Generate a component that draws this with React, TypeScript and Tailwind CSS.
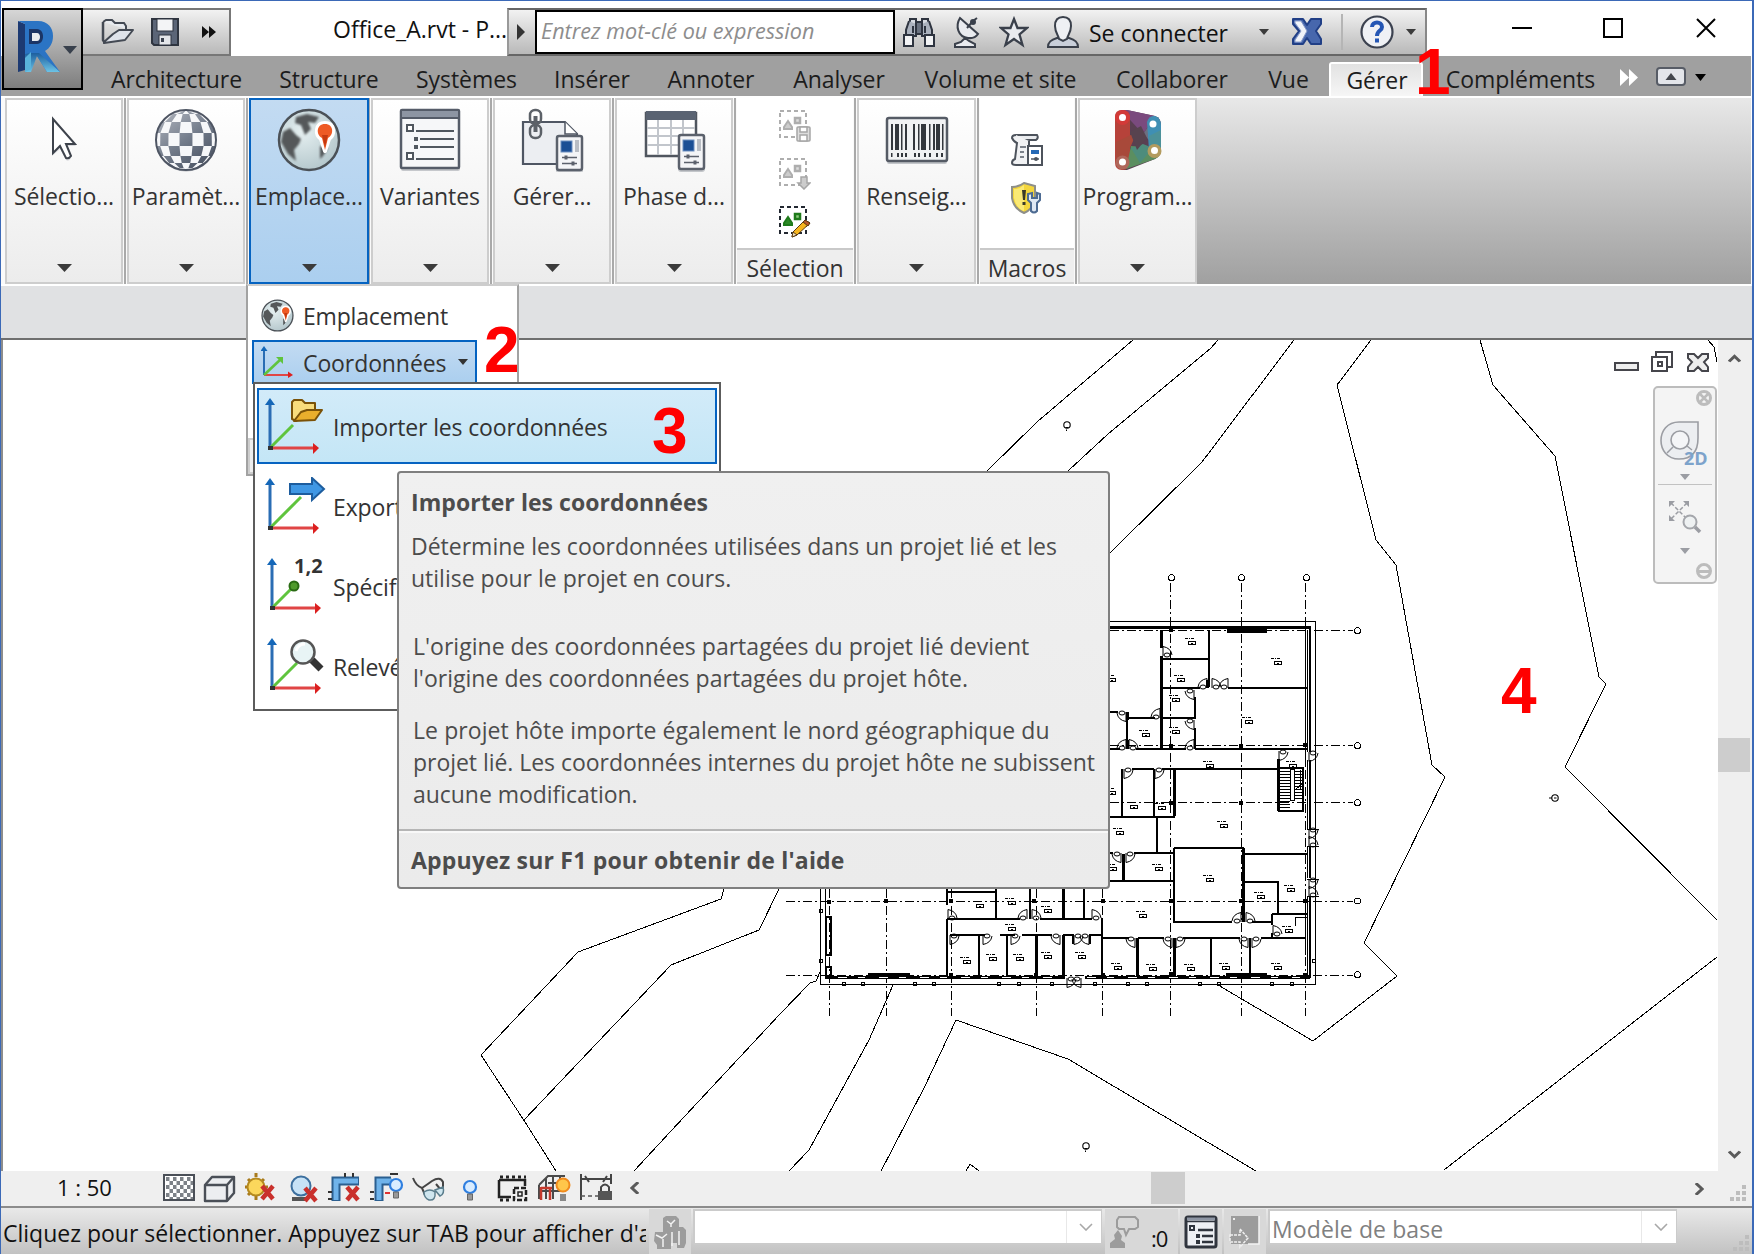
import React from 'react';
import type { ReactNode } from 'react';

/* ---------- small shared glyphs ---------- */

function Caret({ className = '' }: { className?: string }) {
  return (
    <svg className={className} viewBox="0 0 16 8" preserveAspectRatio="none">
      <path d="M0 0H16L8 8Z" fill="currentColor" />
    </svg>
  );
}

function RedNumber({ n, className }: { n: string; className: string }) {
  return (
    <span
      className={`absolute z-40 font-['Liberation_Sans',sans-serif] text-[64px] font-bold leading-[64px] text-[#ff0000] ${className}`}
    >
      {n}
    </span>
  );
}

/* ---------- title bar icons ---------- */

function RevitLogo() {
  return (
    <svg className="h-[54px] w-[46px]" viewBox="0 0 46 54">
      <defs>
        <linearGradient id="rleg" x1="0" y1="0" x2="0" y2="1">
          <stop offset="0" stopColor="#1d5f9e" />
          <stop offset="1" stopColor="#6cc3e6" />
        </linearGradient>
      </defs>
      <path d="M1 1L8 4V50L1 52Z" fill="#1d3a72" />
      <path d="M1 1H21C31 1 36 8 36 16C36 23 33 28 28 31L43 52H30L18 33H14V50L8 52V4Z" fill="#2b74c4" />
      <path d="M14 33H22L43 52H30L20 36L14 52H8V34Z" fill="url(#rleg)" />
      <path d="M8 38L14 32V49L8 52Z" fill="#59b3dc" />
      <path d="M12 9H20C28 9 28 24 20 24H12Z" fill="#1b3566" />
      <path d="M15 13H20C24 13 24 21 20 21H15Z" fill="#e8ecf1" />
    </svg>
  );
}

function FolderIcon() {
  return (
    <svg className="h-[26px] w-[34px]" viewBox="0 0 34 26">
      <path d="M2 3L5 1H11L14 4H23L25 7V10" fill="#e8ebef" stroke="#444a54" strokeWidth="2" />
      <path d="M2 3V21L4 24" fill="none" stroke="#444a54" strokeWidth="2.500" />
      <path d="M3 23L12 15L18 11H32L24 21L3 24Z" fill="#dfe3ea" stroke="#444a54" strokeWidth="2" strokeLinejoin="round" />
    </svg>
  );
}

function SaveIcon() {
  return (
    <svg className="h-[28px] w-[28px]" viewBox="0 0 28 28">
      <path d="M1 1H27V27H3L1 25Z" fill="#5b6577" stroke="#2f3540" strokeWidth="2" />
      <rect x="6" y="1" width="16" height="12" fill="#f3f4f6" stroke="#2f3540" />
      <rect x="8" y="17" width="12" height="10" fill="#e4e6ea" stroke="#2f3540" />
      <rect x="10" y="20" width="3" height="4" fill="#3c4350" />
    </svg>
  );
}

function Binoculars() {
  return (
    <svg className="h-[32px] w-[32px]" viewBox="0 0 32 32" stroke="#2e3440" strokeWidth="2">
      <path d="M7 3H13V13H7Z M19 3H25V13H19Z" fill="#d6dae1" />
      <path d="M6 5L3 14V20H13V8 M26 5L29 14V20H19V8" fill="#aab1bd" />
      <rect x="13" y="6" width="6" height="12" fill="#6a7280" />
      <rect x="1" y="19" width="9" height="11" fill="#f2f3f5" />
      <rect x="22" y="19" width="9" height="11" fill="#f2f3f5" />
      <path d="M10 10V17 M22 10V17" />
    </svg>
  );
}

function Satellite() {
  return (
    <svg className="h-[32px] w-[30px]" viewBox="0 0 30 32" stroke="#3a404b" strokeWidth="2">
      <path d="M8 2C3 10 6 21 16 22C20 22.500 24 21 26 18Z" fill="#e9ebef" />
      <path d="M15 12L21 5L25 2" fill="none" />
      <circle cx="21" cy="6" r="2" fill="#3a404b" />
      <path d="M13 22L17 25L23 28V31H3V28L9 26Z" fill="#e9ebef" />
    </svg>
  );
}

function Star() {
  return (
    <svg className="h-[32px] w-[30px]" viewBox="0 0 30 32">
      <path d="M15 3L18.500 12H28L20.500 18.500L23.500 29L15 23L6.500 29L9.500 18.500L2 12H11.500Z" fill="#e9ebef" stroke="#3a404b" strokeWidth="2.300" />
    </svg>
  );
}

function Person() {
  return (
    <svg className="h-[34px] w-[34px]" viewBox="0 0 34 34">
      <path d="M11 23C5 25 2 27 2 32H32C32 27 29 25 23 23Z" fill="#c9cfda" stroke="#3a404b" strokeWidth="2" />
      <path d="M17 2C11 2 9 6 9 11C9 18 13 21 13 24L17 26L21 24C21 21 25 18 25 11C25 6 23 2 17 2Z" fill="#eef0f4" stroke="#3a404b" strokeWidth="2" />
    </svg>
  );
}

function ExchangeX() {
  return (
    <svg className="h-[28px] w-[30px]" viewBox="0 0 30 28" strokeWidth="2" strokeLinejoin="round">
      <path d="M1 1H11L15 7L19 1H29V6L24 13L29 21V26H19L15 20L11 26H1V21L7 13L1 6Z" fill="#4767ad" stroke="#213f86" />
      <path d="M3 3H9L15 13L9 24H3V22L9 13L3 5Z" fill="#f0f3f9" stroke="#8a9cc8" strokeWidth="1" />
    </svg>
  );
}

function HelpIcon() {
  return (
    <svg className="h-[34px] w-[34px]" viewBox="0 0 34 34">
      <circle cx="17" cy="17" r="15.500" fill="#eff1f5" stroke="#3c4250" strokeWidth="2.200" />
      <path d="M12 12C12 6 22 6 22 12C22 16 17 15 17 21" fill="none" stroke="#2456b4" strokeWidth="4" />
      <rect x="15" y="23.500" width="4" height="4" fill="#2456b4" />
    </svg>
  );
}

/* ---------- ribbon icons ---------- */

function CursorIcon() {
  return (
    <svg className="h-[64px] w-[64px]" viewBox="0 0 64 64">
      <path d="M21 12V47L28 41L34 52Q37 54 39 50L35 38H44Z" fill="#b9bcc2" opacity=".5" />
      <path d="M21 11V45L28 38L34 50Q37 51 39 48L34 36H43Z" fill="#fff" stroke="#3e434c" strokeWidth="2" />
    </svg>
  );
}

function CheckerSphere() {
  const lat = [-31, -26, -18, -7, 6, 16, 23, 28];
  const fr = [-1, -0.88, -0.6, -0.22, 0.22, 0.6, 0.88, 1];
  const cells: ReactNode[] = [];
  const r = (y: number) => Math.sqrt(Math.max(0, 30 * 30 - y * y));
  for (let i = 0; i < 7; i++)
    for (let j = 0; j < 7; j++)
      if ((i + j) % 2 === 0) {
        const a = Math.max(-30, lat[i]);
        const b = Math.min(30, lat[i + 1]);
        cells.push(
          <path key={`${i}-${j}`} d={`M${32 + fr[j] * r(a)} ${32 + a}L${32 + fr[j + 1] * r(a)} ${32 + a}L${32 + fr[j + 1] * r(b)} ${32 + b}L${32 + fr[j] * r(b)} ${32 + b}Z`} fill="url(#chk)" />,
        );
      }
  return (
    <svg className="h-[64px] w-[64px]" viewBox="0 0 64 64">
      <defs>
        <linearGradient id="chk" gradientUnits="userSpaceOnUse" x1="12" y1="6" x2="50" y2="60">
          <stop offset="0" stopColor="#a9aeb8" />
          <stop offset=".5" stopColor="#727b8a" />
          <stop offset="1" stopColor="#4a5363" />
        </linearGradient>
      </defs>
      <ellipse cx="32" cy="33.500" rx="30" ry="30" fill="#b5b8be" />
      <circle cx="32" cy="32" r="30" fill="#f6f7f9" />
      {cells}
      <circle cx="32" cy="32" r="30" fill="none" stroke="#4e5563" strokeWidth="2" />
    </svg>
  );
}

function Globe({ className }: { className: string }) {
  return (
    <svg className={className} viewBox="0 0 64 64">
      <defs>
        <radialGradient id="globe" cx=".4" cy=".35" r=".7">
          <stop offset="0" stopColor="#e6f0f1" />
          <stop offset="1" stopColor="#b3c6cb" />
        </radialGradient>
        <filter id="soft"><feGaussianBlur stdDeviation="1.100" /></filter>
      </defs>
      <circle cx="32" cy="32" r="30" fill="url(#globe)" stroke="#4b5157" strokeWidth="2.500" />
      <g fill="#55585a" filter="url(#soft)">
        <path d="M6 24L13 20L19 27L24 31L22 36L17 42L19 53L11 46L4 34Z" />
        <path d="M19 9L30 6L42 9L38 15L31 14L34 21L28 27L24 17L18 15Z" />
        <path d="M43 38L51 40L46 48L43 51Z" />
      </g>
      <path d="M48 43L44 31C38 27 38 15 48 15C58 15 58 27 52 31Z" fill="#f05a22" stroke="#fff" strokeWidth="4" strokeLinejoin="round" />
      <path d="M48 42L45 30C39 27 39 16 48 16C57 16 57 27 51 30Z" fill="#ee5a24" />
      <path d="M45 27L48 39L51 27Z" fill="#c53a10" />
    </svg>
  );
}

function VariantsIcon() {
  return (
    <svg className="h-[64px] w-[64px]" viewBox="0 0 64 64">
      <rect x="3" y="4" width="59" height="59" fill="#c6c8cc" rx="2" />
      <rect x="3" y="2" width="58" height="58" rx="1" fill="#f6f7f9" stroke="#555c69" strokeWidth="2.500" />
      <rect x="4" y="3" width="56" height="6" fill="#8d95a3" />
      <rect x="4" y="9" width="56" height="2" fill="#555c69" />
      <path d="M18 23H56 M22 31H56 M22 39H56 M18 51H56" stroke="#50575f" strokeWidth="2.200" />
      <path d="M9 17h6v6h-6z M9 45h6v6h-6z" fill="#fff" stroke="#50575f" strokeWidth="2" />
      <path d="M16 29h4v4h-4z M16 37h4v4h-4z" fill="#50575f" />
    </svg>
  );
}

function PropertySheet({ x, y }: { x: number; y: number }) {
  return (
    <g transform={`translate(${x} ${y})`}>
      <rect x="-1" y="-1" width="27" height="38" rx="3" fill="#c3c6ca" />
      <rect x="0" y="0" width="25" height="34" rx="2" fill="#f4f5f7" stroke="#5b616c" strokeWidth="2.500" />
      <rect x="4" y="5" width="11" height="11" fill="#1b4f95" stroke="#6c8fc0" />
      <rect x="18" y="4" width="4" height="12" fill="#b9bdc4" />
      <path d="M5 21.500H20 M5 27.500H20" stroke="#5b616c" strokeWidth="1.500" />
      <path d="M9 19.500v4M16 25.500v4" stroke="#5b616c" strokeWidth="3" />
    </g>
  );
}

function LinkSheet() {
  return (
    <svg className="h-[64px] w-[64px]" viewBox="0 0 64 64">
      <path d="M3 14H45L57 26V56H3Z" fill="#eceef2" stroke="#4f5663" strokeWidth="2.200" />
      <path d="M45 14V26H57" fill="#fff" stroke="#4f5663" strokeWidth="1.500" />
      <g fill="none" stroke="#5c6168" strokeWidth="2.500">
        <rect x="10" y="2" width="11" height="14" rx="5" />
        <rect x="10" y="17" width="11" height="13" rx="5" />
        <path d="M15.500 8V24" strokeWidth="4" />
      </g>
      <PropertySheet x={37} y={28} />
    </svg>
  );
}

function PhaseIcon() {
  return (
    <svg className="h-[64px] w-[64px]" viewBox="0 0 64 64">
      <rect x="4" y="5" width="50" height="43" fill="#fff" stroke="#50565f" strokeWidth="2.500" />
      <rect x="4" y="3" width="50" height="9" fill="#5a6372" />
      <path d="M5 20H53M5 28H53M5 37H53M16 12V47M29 12V47M41 12V47" stroke="#c2c6cc" strokeWidth="2" />
      <PropertySheet x={37} y={27} />
    </svg>
  );
}

function Barcode() {
  return (
    <svg className="h-[64px] w-[64px]" viewBox="0 0 64 64">
      <rect x="2" y="13" width="60" height="43" rx="2" fill="#c3c6ca" />
      <rect x="2" y="10" width="60" height="43" rx="2" fill="#f1f2f4" stroke="#555b65" strokeWidth="2.500" />
      <g fill="#33373d">
        <path d="M6 16h2v26h-2z M10 16h4v26h-4z M16 16h1.500v26h-1.500z M20 16h2v26h-2z M28 16h2v26h-2z M33 16h1.500v26h-1.500z M36 16h5v26h-5z M44 16h1.500v26h-1.500z M48 16h2v26h-2z M51 16h4v26h-4z M57 16h1.500v26h-1.500z" />
        <path d="M6 45h1.500v4h-1.500z M12 45h2v4h-2z M16 45h2v4h-2z M20 45h2v4h-2z M29 45h2v4h-2z M33 45h2v4h-2z M39 45h2v4h-2z M44 45h2v4h-2z M51 45h2v4h-2z M56 45h2v4h-2z" />
      </g>
    </svg>
  );
}

function DynamoIcon() {
  return (
    <svg className="h-[64px] w-[50px]" viewBox="0 0 50 64">
      <path d="M9 2H14L42 8Q48 10 48 17V42Q48 48 42 51L14 62H9Z" fill="#5a3f52" />
      <path d="M8 2L14 2L42 8L30 26Z" fill="#7a4a7e" />
      <path d="M42 9V38L30 26Z" fill="#6d6f80" />
      <path d="M2 9Q2 2 9 2Q17 2 17 9V54Q17 62 9 62Q2 62 2 54Z" fill="#b6423a" />
      <path d="M3 34L24 24L17 40L13 61Q3 62 3 54Z" fill="#a8493a" />
      <path d="M13 61L18 38L46 40Q50 47 42 51Z" fill="#5b8e60" />
      <path d="M18 40L30 36L40 40L27 55Z" fill="#4d8c7c" />
      <path d="M34 14Q36 7 42 8Q48 10 48 17V42H36Z" fill="#3f8fb4" />
      <path d="M36 28L48 22V44H38Z" fill="#4c9199" />
      <path d="M17 24L28 18L34 30L24 42Z" fill="#57434f" />
      <circle cx="41.500" cy="43" r="7" fill="#b39b5e" />
      <circle cx="9.500" cy="9.500" r="7.500" fill="#d33a38" />
      <circle cx="9.500" cy="54.500" r="7" fill="#b0675a" />
      <g fill="#fff"><circle cx="9.500" cy="9.500" r="3.500" /><circle cx="9.500" cy="54" r="3.500" /><circle cx="40" cy="16" r="3.500" /><circle cx="41.500" cy="42.500" r="3.500" /></g>
    </svg>
  );
}

function SelectSet({ kind }: { kind: 'save' | 'load' | 'edit' }) {
  const on = kind === 'edit';
  return (
    <svg className="h-[32px] w-[32px]" viewBox="0 0 32 32">
      <path d="M1 1H27V27H1Z" fill="none" stroke={on ? '#222831' : '#aeaeae'} strokeWidth="2" strokeDasharray="4 3" />
      <rect x="16" y="8" width="5" height="5" fill={on ? '#8fcb7f' : '#ddd'} stroke={on ? '#1e7a1a' : '#aeaeae'} strokeWidth="2.500" />
      <path d="M5 19V17L9 11L13 17V19Z" fill={on ? '#2d8a26' : '#ccc'} stroke={on ? '#1e7a1a' : '#aeaeae'} strokeWidth="2" />
      {kind === 'save' && (
        <g stroke="#a6a6a6" strokeWidth="1.500"><rect x="18" y="17" width="13" height="14" rx="1" fill="#ddd" /><rect x="21" y="17" width="7" height="5" fill="#fff" /><rect x="21" y="25" width="7" height="6" fill="#fff" /></g>
      )}
      {kind === 'load' && <path d="M22 19H28V25H31L25 31L19 25H22Z" fill="#ccc" stroke="#a6a6a6" strokeWidth="1.500" />}
      {kind === 'edit' && (
        <g stroke="#5a3a10" strokeWidth="1"><path d="M13 31L14 26L26 14L31 17L18 29Z" fill="#f6b51e" /><path d="M26 14L31 17L29 20L24 16Z" fill="#b8562b" /><path d="M13 31L14 26L18 29Z" fill="#f4e2c0" /></g>
      )}
    </svg>
  );
}

function MacroScroll() {
  return (
    <svg className="h-[32px] w-[32px]" viewBox="0 0 32 32">
      <path d="M5 1H26Q28 4 25 6H5" fill="#e9ebee" stroke="#4d535c" strokeWidth="2" />
      <path d="M5 1Q1 1 1 4Q3 8 6 9L4 25Q1 26 1 29Q1 31 5 31H18V7" fill="#f1f2f4" stroke="#4d535c" strokeWidth="2" />
      <path d="M9 13H15M9 18H13M9 23H13" stroke="#7b818a" strokeWidth="2" />
      <rect x="17" y="12" width="14" height="19" fill="#fff" stroke="#4d535c" strokeWidth="2" />
      <rect x="20" y="16" width="8" height="4" fill="#2669b5" />
      <path d="M20 25H28" stroke="#4d535c" strokeWidth="1.500" />
      <circle cx="25" cy="25" r="2" fill="#4d535c" />
    </svg>
  );
}

function MacroShield() {
  return (
    <svg className="h-[32px] w-[32px]" viewBox="0 0 32 32">
      <path d="M13 1L24 4V18Q22 27 13 31Q3 27 1 16V5Q8 5 13 1Z" fill="#f4d63c" stroke="#8e8f89" strokeWidth="2" />
      <path d="M13 3V29Q5 26 3 16V7Q9 7 13 3Z" fill="#fae975" />
      <path d="M11 8H15L14 18H12Z M11.500 20H14.500V23H11.500Z" fill="#3b3a28" />
      <path d="M17 12V18L20 21V29Q23 32 26 29V21L29 18V12L26 11V16H21V11Z" fill="#dfe8f3" stroke="#4d6b92" strokeWidth="2" />
    </svg>
  );
}

/* ---------- ribbon ---------- */

function RibbonPanel({ label, icon, active = false, width = 'w-[120px]' }: { label: string; icon: ReactNode; active?: boolean; width?: string }) {
  return (
    <div
      className={
        `flex h-[186px] shrink-0 flex-col items-center border-2 pt-[7px] ${width} ` +
        (active
          ? 'relative -mr-[2px] border-[#0563c1] bg-linear-to-b from-[#c3dbf2] to-[#abcfef]'
          : 'border-[#cdcdcd] bg-linear-to-b from-[#ffffff] to-[#ececec]')
      }
    >
      <div className="flex h-[66px] shrink-0 items-center">{icon}</div>
      <span className="mt-[8px] shrink-0 whitespace-nowrap text-[23px] leading-[30px] tracking-[-0.1px] text-[#333]">{label}</span>
      <Caret className="mt-[53px] h-[8px] w-[15px] shrink-0 text-[#3b3b3b]" />
    </div>
  );
}

function Divider() {
  return <div className="mx-px h-[186px] w-[2px] shrink-0 bg-[#a9a9a9]" />;
}

function IconPanel({ label, children, width }: { label: string; children: ReactNode; width: string }) {
  return (
    <div className={`flex h-[186px] shrink-0 flex-col bg-white ${width}`}>
      <div className="flex flex-1 flex-col items-center justify-center gap-[16px] pt-[2px]">{children}</div>
      <div className="flex h-[36px] items-center justify-center border-b-2 border-t-2 border-b-[#d4d4d4] border-t-[#c9c9c9] bg-[#eeeeee] pt-[3px] text-[23px] leading-[30px] text-[#333]">
        {label}
      </div>
    </div>
  );
}

/* ---------- coordinate menu icons ---------- */

function AxisIcon({ kind }: { kind: 'import' | 'export' | 'point' | 'report' }) {
  const s = kind === 'point' || kind === 'report' ? 2 : 0;
  const end = kind === 'import' ? [28, 28] : kind === 'export' ? [36, 20] : kind === 'point' ? [26, 30] : [30, 26];
  return (
    <svg className="h-[58px] w-[62px] shrink-0" viewBox="0 0 62 58">
      <g transform={`translate(${s} 0)`}>
        <path d="M5 51V6" stroke="#2a6db4" strokeWidth="3" />
        <path d="M5 1L10 8H0Z" fill="#1467b8" />
        <path d="M5 51H50" stroke="#e04545" strokeWidth="3" />
        <path d="M48 46L54 51L48 57Z" fill="#dc1f1f" />
        <path d={`M5 51L${end[0]} ${end[1]}`} stroke="#5fc43d" strokeWidth="3" />
        <rect x="3" y="49" width="5" height="4" fill="#333" />
      </g>
      {kind === 'import' && (
        <g stroke="#7a5208" strokeWidth="2" strokeLinejoin="round">
          <path d="M27 5L29 3H37L40 6H50V13L31 24L27 22Z" fill="#f8dc7c" />
          <path d="M29 24L36 15L42 13H57L50 23Z" fill="#e9ae2c" />
        </g>
      )}
      {kind === 'export' && (
        <path d="M25 7H47V1L59 12L47 23V17H25Z" fill="#3f97e4" stroke="#1d5d9e" strokeWidth="2" />
      )}
      {kind === 'point' && (
        <>
          <circle cx="29" cy="29" r="4.500" fill="#4f9a2c" stroke="#2a6a14" strokeWidth="2" />
          <text x="29" y="16" fontFamily="Open Sans, sans-serif" fontWeight="700" fontSize="20" fill="#333">1,2</text>
        </>
      )}
      {kind === 'report' && (
        <>
          <path d="M47 23L56 32" stroke="#333" strokeWidth="7" />
          <circle cx="38" cy="15" r="11.500" fill="#e8f4f5" stroke="#555" strokeWidth="2.500" />
          <path d="M31 14Q33 7 40 7" fill="none" stroke="#fff" strokeWidth="3" />
        </>
      )}
    </svg>
  );
}

function SmallAxis() {
  return (
    <svg className="h-[32px] w-[32px]" viewBox="0 0 32 32">
      <path d="M3 29V4" stroke="#2a6db4" strokeWidth="2" /><path d="M3 0L6.500 5H-.500Z" fill="#1467b8" />
      <path d="M3 29H28" stroke="#e04545" strokeWidth="2" /><path d="M27 25.500L32 29L27 32Z" fill="#dc1f1f" />
      <path d="M3 29L20 13" stroke="#5fc43d" strokeWidth="2.500" /><path d="M15 11H22V18Z" fill="#5fc43d" />
    </svg>
  );
}

function MenuItem({ label, kind, active = false }: { label: string; kind: 'import' | 'export' | 'point' | 'report'; active?: boolean }) {
  return (
    <div
      className={
        'flex h-[76px] items-center gap-[6px] border-2 pl-[6px] text-[23px] leading-[30px] text-[#333] ' +
        (active ? 'border-[#0563c1] bg-linear-to-b from-[#d2ebf9] to-[#c4e6f6]' : 'border-transparent')
      }
    >
      <AxisIcon kind={kind} />
      <span className="whitespace-nowrap pt-[2px] tracking-[-0.15px]">{label}</span>
    </div>
  );
}

/* ---------- drawing area ---------- */

type P2 = [number, number];

const CONTOURS = [
  '1133,340 1037,422 987,471',
  '1218,340 1211,348 1108,434 1068,471',
  '1294,340 1202,462 1110,553',
  '1371,340 1337,385 1376,540 1396,565 1432,765 1445,777 1364,943 1397,976 1313,1041 1218,985',
  '1480,340 1493,385 1555,456 1599,677 1606,684 1565,767 1717,920',
  '1717,957 1444,1170',
  '881,1171 892,1150 925,1086 956,1020 1068,1059 1256,1171',
  '893,985 869,1040 809,1150 789,1171',
  '820,965 820,972 816,981 810,983 780,1014 671,1131 634,1171',
  '779,889 759,930 671,965 524,1120',
  '724,889 721,899 578,952 481,1055 525,1122 556,1171',
  '966,1171 970,1164 979,1171',
  '1708,340 1714,347 1717,362',
];

const THIN_WALLS =
  'M820.500 889V984H1315.500V621H1110 M825 889V978 M1307 630V752M1307 760V829M1307 846V878M1307 896V978' +
  'M1307 829H1319M1307 846H1319M1307 879H1319M1307 896H1319 M1305 630V765M1305 896V955' +
  'M1290 769V800H1294V769Z M1300 770V790 M1295 790L1302 784 M1295 917V926M1307 917H1295';

const WALLS =
  'M1209 630V687M1162 659H1209M1162 688H1200M1228 688H1307M1195 697V718H1162M1195 728V749M1127 712V748M1110 712H1118M1127 718H1155' +
  'M1110 749H1120M1136 749H1186M1195 749H1308M1132 769H1154M1162 769H1278M1122 769V817M1154 769V817M1110 817H1175' +
  'M1157 817V853M1110 853H1113M1134 853H1174M1110 881H1174M1174 848H1244M1174 848V922H1232M1252 922H1272M1244 854H1308M1244 882H1278V914M1272 914H1307M1272 914V925M1272 933V938' +
  'M1102 938H1129M1138 938H1164M1183 938H1240M1261 938H1305M1102 918V978M1211 938V977M1250 938V977' +
  'M947 892H996M996 889V919M1030 889V919M1084 889V919M947 919H1020M1040 919H1092M947 889V905M947 919V976M950 935H985M1000 935H1015M1022 935H1052M1063 935H1073V944M1102 935H1090V944' +
  'M979 935V976M1007 935V976M1278 768H1303V811H1278' +
  'M1310 627V752M1310 760V829M1310 846V878M1310 896V978';

const THICK_WALLS =
  'M1161 630V648M1161 656V749M1110 627H1311M1174.500 769V816M1278 759V811M1243.500 848V922M1123.500 854V881M1137 938V977M1174 938V977' +
  'M1036 935V976M1063.500 889V919M1063.500 935V976M1127 712V720M1127 740V749M1207 680V688M825 977H1065M1085 977H1310';

const DOORS: [number, number, number, number][] = [
  [1162, 656, 1, -1], [1208, 688, -1, -1], [1211, 688, 1, -1], [1229, 688, -1, -1], [1195, 690, -1, 1], [1195, 720, -1, 1],
  [1161, 718, -1, -1], [1127, 712, -1, 1], [1127, 749, -1, -1], [1128, 749, 1, -1], [1195, 749, -1, -1], [1123, 769, 1, 1], [1154, 769, 1, 1],
  [1278, 751, 1, 1], [1308, 752, 1, 1], [1308, 829, 1, 1], [1308, 846, 1, -1], [1308, 879, 1, 1], [1308, 896, 1, -1],
  [1122, 853, -1, 1], [1125, 853, 1, 1], [1242, 922, -1, -1], [1245, 922, 1, -1], [1272, 935, 1, -1],
  [1136, 938, -1, 1], [1173, 938, -1, 1], [1175, 938, 1, 1], [1249, 938, -1, 1], [1251, 938, 1, 1],
  [947, 919, 1, -1], [1028, 919, -1, -1], [1031, 919, 1, -1], [1091, 919, 1, -1],
  [949, 935, 1, 1], [982, 935, 1, 1], [1010, 935, 1, 1], [1061, 935, -1, 1], [1073, 935, 1, 1], [1090, 935, -1, 1],
  [1066, 978, 1, 1], [1082, 978, -1, 1],
];

const TAGS: P2[] = [
  [1192, 643], [1278, 663], [1181, 680], [1176, 700], [1249, 722], [1146, 735], [1176, 732], [1210, 766], [1293, 766],
  [1112, 680], [1134, 807], [1162, 808], [1112, 793], [1224, 826], [1120, 833], [1113, 869], [1159, 869], [1210, 880], [1291, 890],
  [1261, 897], [1143, 916], [1289, 931], [1118, 968], [1153, 969], [1191, 969], [1226, 968], [1278, 968],
  [980, 906], [1012, 903], [1048, 911], [1012, 929], [967, 962], [993, 959], [1020, 959], [1048, 957], [1082, 957],
];

const COLUMNS: P2[] = [
  [1171, 630], [1171, 746], [1241, 746], [1305, 745], [1171, 803], [1241, 803], [1171, 901], [1103, 901], [1241, 901], [1305, 901],
  [829, 902], [886, 901], [951, 901], [1034, 901], [1171, 974], [951, 975], [1036, 975], [1103, 975], [1305, 975],
];

const KNOBS: P2[] = [
  [821, 911], [821, 961], [844, 984], [863, 984], [915, 984], [934, 984], [999, 984], [1019, 984], [1052, 984], [1095, 984],
  [1128, 984], [1147, 984], [1200, 984], [1219, 984], [1272, 984], [1292, 984], [1314, 961],
];

function Tree({ x, y }: { x: number; y: number }) {
  return (
    <g transform={`translate(${x} ${y})`} shapeRendering="auto">
      <circle r="3.200" fill="#fff" strokeWidth="1.100" />
      <path d="M-1.500 2.500H1.500M-.500 4.500V6" />
    </g>
  );
}

function DrawingCanvas() {
  return (
    <svg className="h-[831px] w-[1715px] bg-white" viewBox="3 340 1715 831" shapeRendering="crispEdges" fill="none" stroke="#000">
      {CONTOURS.map((p) => <polyline key={p} points={p} strokeWidth="1" />)}
      <Tree x={1067} y={425} />
      <Tree x={1086} y={1146} />
      <g transform="translate(1555 798)" shapeRendering="auto"><circle r="3.200" strokeWidth="1.100" /><path d="M-1 0H1.500M-3 0H-6" /></g>

      <g strokeDasharray="9 3 2 3" strokeWidth="1">
        <path d="M829.500 889V1016M886.500 889V1016M951.500 889V1016M1036.500 889V1016M1102.500 889V1016M1170.500 583V1016M1241.500 583V1016M1305.500 583V1016" />
        <path d="M1110 630.500H1353M1110 745.500H1353M1110 802.500H1353M786 901.500H1353M786 975.500H1353" />
      </g>
      {[1171.5, 1241.5, 1306.5].map((x) => <circle key={x} cx={x} cy="577.500" r="3" />)}
      {[630.5, 745.5, 802.5, 901, 974.5].map((y) => <circle key={y} cx="1357.500" cy={y} r="3" />)}

      <path d={THIN_WALLS} />
      <path d={WALLS} strokeWidth="2" />
      <path d={THICK_WALLS} strokeWidth="3" />
      <path d="M1227 631H1267" strokeWidth="4" />
      <path d="M868 974.500H910M1226 974.500H1267" strokeWidth="4" />
      <path d="M826 917H831V955H826ZM826 967H831V976H826Z" strokeWidth="1.500" />
      <path d="M838 977.500H1063M1087 977.500H1300" stroke="#fff" strokeDasharray="9 11 7 14" />
      {Array.from({ length: 13 }, (_, i) => <path key={i} d={`M1279 ${771.5 + i * 3}H1290${i < 10 ? 'M1294 ' + (771.5 + i * 3) + 'H1303' : ''}`} />)}

      {DOORS.map(([x, y, sx, sy], i) => (
        <g key={i} transform={`translate(${x} ${y}) scale(${sx} ${sy})`} shapeRendering="auto">
          <path d="M1 0V9.500Q9 8 10 1" />
          <ellipse cx="5" cy="1" rx="3" ry="2" />
        </g>
      ))}
      {TAGS.map(([x, y], i) => (
        <g key={i}>
          <rect x={x - 3.5} y={y - 1.5} width="7" height="3" />
          <path d={`M${x - 1} ${y + 0.5}h2`} />
          <path d={`M${x - 7} ${y - 4.5}h10`} strokeDasharray="3 1 1 1" />
        </g>
      ))}
      {COLUMNS.map(([x, y], i) => <rect key={i} x={x - 2} y={y - 2} width="4" height="4" fill="#000" stroke="none" />)}
      {KNOBS.map(([x, y], i) => <ellipse key={i} cx={x} cy={y} rx="2" ry="1.500" />)}
    </svg>
  );
}

/* ---------- navigation bar ---------- */

function NavBar() {
  return (
    <div className="absolute left-[1652px] top-[385px] flex h-[198px] w-[64px] flex-col items-center rounded-[5px] border-2 border-[#bcbcbc] bg-[#f4f4f4]">
      <svg className="h-[194px] w-[60px]" viewBox="1655 388 60 194" fill="none">
        <circle cx="1704" cy="398" r="6.500" fill="#f4f4f4" stroke="#bcbcbc" strokeWidth="3" />
        <path d="M1700 394L1708 402M1708 394L1700 402" stroke="#bcbcbc" strokeWidth="2.500" />
        <path d="M1698 422H1679C1655 422 1655 459 1679 459C1693 459 1698 450 1698 438Z" fill="#eceef1" stroke="#9b9da3" strokeWidth="1.600" />
        <circle cx="1680" cy="440" r="9" fill="#f4f5f7" stroke="#9b9da3" strokeWidth="1.600" />
        <path d="M1673 447L1667 453M1687 446L1692 450" stroke="#9b9da3" strokeWidth="1.500" />
        <text x="1684" y="465" fontFamily="Open Sans, sans-serif" fontSize="18" fontWeight="700" fill="#7da3cb">2D</text>
        <path d="M1680 474H1690L1685 480Z M1680 548H1690L1685 554Z" fill="#9b9da3" />
        <path d="M1658 484.500H1712" stroke="#c2c2c2" />
        <path d="M1671 503L1687 519M1687 503L1671 519" stroke="#9b9da3" strokeWidth="1.500" strokeDasharray="4 2" />
        <path d="M1669 501H1675L1669 507Z M1689 501H1683L1689 507Z M1669 521H1675L1669 515Z" fill="#9b9da3" />
        <path d="M1695 527L1700 532" stroke="#9b9da3" strokeWidth="3.500" />
        <circle cx="1690" cy="522" r="6.500" fill="#eef1f2" stroke="#a4a6ab" strokeWidth="2" />
        <circle cx="1704" cy="571" r="6.500" fill="#f4f4f4" stroke="#bcbcbc" strokeWidth="3" />
        <path d="M1699 570H1709V573H1699Z" fill="#bcbcbc" />
      </svg>
    </div>
  );
}

function MdiControls() {
  return (
    <svg className="absolute left-[1611px] top-[348px] h-[26px] w-[100px]" viewBox="1612 349 100 26" fill="#fff" stroke="#45454b" strokeWidth="2">
      <rect x="1615" y="363" width="23" height="7" fill="#eee" />
      <path d="M1656 357V352H1672V367H1667" />
      <rect x="1652" y="357" width="15" height="14" />
      <rect x="1658" y="362" width="4" height="4" />
      <path d="M1688 354H1694L1698 358L1702 354H1708V358L1704 362L1708 367V371H1702L1698 367L1694 371H1688V367L1692 362L1688 358Z" fill="#eee" />
    </svg>
  );
}

/* ---------- view control bar ---------- */

function RedX({ x, y }: { x: number; y: number }) {
  return <path d={`M${x} ${y}l11 13M${x + 11} ${y}l-11 13`} stroke="#c9302c" strokeWidth="4.500" />;
}

function Bulb({ x, y }: { x: number; y: number }) {
  return (
    <g>
      <circle cx={x} cy={y} r="6" fill="#d9ecff" stroke="#2f7fe0" strokeWidth="2.200" />
      <path d={`M${x - 2.500} ${y + 7}h5v6h-5z`} fill="#999" stroke="#666" />
    </g>
  );
}

function ViewIcons() {
  return (
    <svg className="h-[36px] w-[450px]" viewBox="163 1171 450 36" fill="none">
      {/* detail level */}
      <rect x="164" y="1176" width="30" height="23" fill="#fff" />
      {Array.from({ length: 24 }, (_, i) => {
        const r = Math.floor(i / 4);
        return <path key={i} d={`M${166 + (i % 4) * 7 + (r % 2) * 3.5} ${1177 + r * 4}h3.500v4h-3.500z`} fill="#7d8288" />;
      })}
      <rect x="164" y="1175" width="30" height="25" stroke="#4a4f57" strokeWidth="2" />
      {/* visual style */}
      <g stroke="#4a4f57" strokeWidth="2.400" strokeLinejoin="round">
        <path d="M205 1185L212 1177H234V1193L227 1201H205Z" fill="#eceef1" />
        <path d="M205 1185H227V1201M227 1185L234 1177" />
      </g>
      {/* sun path off */}
      <path d="M256 1173V1177M256 1196V1200M245 1187H248M264 1187H268M248 1179L250 1181M264 1179L262 1181M248 1195L250 1193" stroke="#a87a1c" strokeWidth="3" />
      <circle cx="256" cy="1187" r="8.500" fill="#fbd75c" stroke="#b58a20" strokeWidth="2" />
      <RedX x={262} y={1186} />
      {/* shadows off */}
      <path d="M292 1199H308" stroke="#555" strokeWidth="4" />
      <circle cx="301" cy="1186" r="9.500" fill="#c7e2f6" stroke="#3c6f9e" strokeWidth="2" />
      <RedX x={305} y={1188} />
      {/* crop region off */}
      <path d="M336 1201V1181H359" stroke="#2b5f90" strokeWidth="9" />
      <path d="M336 1200V1181H358" stroke="#6fb3ea" strokeWidth="5" />
      <path d="M328 1192H332M328 1199H332M345 1173V1177M353 1173V1177" stroke="#333" strokeWidth="2" />
      <RedX x={347} y={1187} />
      {/* show crop region */}
      <path d="M379 1201V1181H391" stroke="#2b5f90" strokeWidth="9" />
      <path d="M379 1200V1181H392" stroke="#6fb3ea" strokeWidth="5" />
      <path d="M370 1192H374M370 1199H374M390 1174H398" stroke="#333" strokeWidth="2" />
      <path d="M385 1193H390" stroke="#d33" strokeWidth="2" />
      <Bulb x={396} y={1185} />
      {/* temporary hide */}
      <path d="M413 1178Q416 1186 422 1188Q428 1184 432 1181Q440 1176 443 1182V1188M422 1188L425 1195M436 1184L441 1190" stroke="#444" strokeWidth="2" />
      <path d="M424 1192Q430 1188 435 1192Q436 1201 429 1200Q424 1198 424 1192ZM435 1190L443 1187Q445 1194 440 1196Z" fill="#cfe6ef" stroke="#5a7d8c" strokeWidth="1.500" />
      {/* reveal hidden */}
      <Bulb x={470} y={1187} />
      {/* temporary view properties */}
      <path d="M499 1180V1197H511M499 1180H525V1186" stroke="#222" strokeWidth="2.500" />
      <path d="M500 1177H526M500 1200H512" stroke="#222" strokeWidth="3" strokeDasharray="3 3" />
      <rect x="514" y="1188" width="12" height="12" stroke="#222" strokeWidth="2.500" strokeDasharray="5 2" />
      <rect x="518" y="1192" width="4" height="4" stroke="#222" strokeWidth="1.500" />
      {/* analytical model */}
      <path d="M539 1185V1199M546 1178V1199M553 1176V1199M560 1176V1190M539 1185L548 1176H565M539 1191H562M548 1183H562" stroke="#4a4a4a" strokeWidth="2" />
      <path d="M541 1187V1200M550 1187V1200M541 1188H552" stroke="#c63a2c" strokeWidth="2.500" />
      <circle cx="563" cy="1185" r="6.500" fill="#ffc64a" stroke="#f08a1c" strokeWidth="2" />
      <path d="M560 1194h6v7h-6z" fill="#888" />
      {/* constraints */}
      <path d="M581 1174V1200M611 1174V1184M581 1179H611M585 1176L589 1182M607 1176L603 1182" stroke="#444" strokeWidth="2" />
      <path d="M581 1196H598" stroke="#555" strokeWidth="1.500" strokeDasharray="4 3" />
      <path d="M601 1191V1187Q605 1182 609 1187V1191" stroke="#444" strokeWidth="2" />
      <rect x="598" y="1191" width="14" height="9" fill="#555" />
    </svg>
  );
}

function Grip() {
  return (
    <svg className="h-[17px] w-[17px]" viewBox="0 0 17 17" fill="#bdbdbd">
      <path d="M12 0h4v4h-4zM6 6h4v4h-4zM12 6h4v4h-4zM0 12h4v4h-4zM6 12h4v4h-4zM12 12h4v4h-4z" />
    </svg>
  );
}

function Chevron({ d, className }: { d: string; className: string }) {
  return (
    <svg className={className} viewBox="0 0 12 12" fill="none" stroke="currentColor" preserveAspectRatio="none">
      <path d={d} strokeWidth="3" />
    </svg>
  );
}

function Combo({ text }: { text?: string }) {
  return (
    <div className="flex h-[36px] w-[409px] shrink-0 border-2 border-r border-[#cbcbcb] bg-white">
      <span className="flex-1 pl-[2px] pt-[2px] text-[23px] leading-[33px] tracking-[0.1px] text-[#808080]">{text}</span>
      <span className="flex w-[35px] items-center border-l border-[#e8e8e8] pl-[12px]">
        <svg className="h-[8px] w-[14px]" viewBox="0 0 14 8"><path d="M1 1L7 7L13 1" fill="none" stroke="#a8a8a8" strokeWidth="1.600" /></svg>
      </span>
    </div>
  );
}

const TABS: { label: string; cls: string }[] = [
  { label: 'Architecture', cls: 'w-[169px]' },
  { label: 'Structure', cls: 'w-[136px]' },
  { label: 'Systèmes', cls: 'w-[139px]' },
  { label: 'Insérer', cls: 'w-[112px]' },
  { label: 'Annoter', cls: 'w-[126px]' },
  { label: 'Analyser', cls: 'w-[130px]' },
  { label: 'Volume et site', cls: 'w-[193px]' },
  { label: 'Collaborer', cls: 'w-[150px]' },
  { label: 'Vue', cls: 'w-[83px]' },
  { label: 'Gérer', cls: 'w-[94px]' },
  { label: 'Compléments', cls: 'w-[193px]' },
];

export default function App() {
  return (
    <div className="relative flex h-[1254px] w-[1754px] flex-col overflow-hidden border-l border-r-2 border-t border-[#3b69b7] bg-white font-['Open_Sans','Noto_Sans',sans-serif]">
      {/* title bar */}
      <header className="flex h-[55px] shrink-0 items-start pl-[82px] pt-[7px]">
        <div className="flex h-[48px] w-[148px] items-center border-y-2 border-r-2 border-[#777] bg-linear-to-b from-[#f2f2f2] to-[#b9b9b9] pl-[18px]">
          <FolderIcon />
          <div className="ml-[16px]"><SaveIcon /></div>
          <svg className="ml-[23px] h-[12px] w-[14px]" viewBox="0 0 14 12"><path d="M0 0L7 6L0 12ZM7 0L14 6L7 12Z" fill="#111" /></svg>
        </div>
        <span className="ml-[102px] w-[174px] whitespace-nowrap text-[23px] leading-[42px] text-[#111]">Office_A.rvt - P...</span>
        <div className="flex h-[48px] w-[920px] items-center border-2 border-l-2 border-b-[#666] border-l-[#999] border-r-[#888] border-t-[#666] bg-linear-to-b from-[#f2f2f2] to-[#b9b9b9] text-[#3b3b3b]">
          <svg className="ml-[8px] h-[16px] w-[8px]" viewBox="0 0 8 16"><path d="M0 0L8 8L0 16Z" fill="#333" /></svg>
          <div className="ml-[10px] h-[44px] w-[360px] shrink-0 border-2 border-black bg-white pl-[4px] text-[21.6px] italic leading-[38px] text-[#8d8d8d]">
            Entrez mot-clé ou expression
          </div>
          <div className="ml-[8px] flex shrink-0 items-center gap-[17px]">
            <Binoculars /><Satellite /><Star /><Person />
          </div>
          <span className="ml-[9px] w-[142px] shrink-0 whitespace-nowrap pt-[3px] text-[23px] leading-[41px] text-[#111]">Se connecter</span>
          <Caret className="ml-[28px] h-[6px] w-[10px] shrink-0" />
          <div className="ml-[23px] shrink-0"><ExchangeX /></div>
          <div className="ml-[19px] h-[36px] w-[2px] shrink-0 bg-[#b5b5b5]" />
          <div className="ml-[17px] shrink-0"><HelpIcon /></div>
          <Caret className="ml-[12px] h-[6px] w-[10px] shrink-0" />
        </div>
        <svg className="ml-[83px] mt-[7px] h-[26px] w-[210px]" viewBox="1510 15 210 26" fill="none" stroke="#000" strokeWidth="2">
          <path d="M1512 28H1532" />
          <rect x="1604" y="19" width="18" height="18" />
          <path d="M1697 19L1715 37M1715 19L1697 37" />
        </svg>
      </header>

      {/* ribbon tabs */}
      <nav className="mr-px flex h-[40px] shrink-0 items-end bg-[#a0a0a0] pl-[90px]">
        {TABS.map((t) => (
          <div
            key={t.label}
            className={
              `flex h-[34px] shrink-0 items-center justify-center whitespace-nowrap pl-[2px] text-[23px] leading-[30px] tracking-[-0.05px] text-[#1c1c1c] ${t.cls} ` +
              (t.label === 'Gérer' ? 'rounded-t-[3px] border-2 border-b-0 border-white bg-linear-to-b from-[#e2e2e2] to-[#f6f6f6]' : '')
            }
          >
            {t.label}
          </div>
        ))}
        <svg className="mb-[10px] ml-[4px] h-[17px] w-[18px]" viewBox="0 0 18 17"><path d="M0 0L9 8.500L0 17ZM9 0L18 8.500L9 17Z" fill="#fff" /></svg>
        <svg className="mb-[9px] ml-[18px] h-[20px] w-[30px]" viewBox="0 0 30 20"><rect x="1" y="1" width="28" height="17" rx="3" fill="#e3e5ea" stroke="#575c66" strokeWidth="2" /><path d="M15 6L20.500 13H9.500Z" fill="#43464d" /></svg>
        <Caret className="mb-[15px] ml-[9px] h-[7px] w-[11px] text-black" />
      </nav>

      {/* ribbon */}
      <section className="mr-px flex h-[188px] shrink-0 border-t-2 border-white bg-linear-to-b from-[#e8e8e8] to-[#a0a0a0]">
        <div className="flex bg-[#fafafa] pl-[4px]">
          <RibbonPanel label="Sélectio..." icon={<CursorIcon />} width="w-[118px]" /><Divider />
          <RibbonPanel label="Paramèt..." icon={<CheckerSphere />} width="w-[118px]" /><Divider />
          <RibbonPanel label="Emplace..." icon={<Globe className="h-[64px] w-[64px]" />} active width="w-[120px]" /><Divider />
          <RibbonPanel label="Variantes" icon={<VariantsIcon />} width="w-[118px]" /><Divider />
          <RibbonPanel label="Gérer..." icon={<LinkSheet />} width="w-[118px]" /><Divider />
          <RibbonPanel label="Phase d..." icon={<PhaseIcon />} width="w-[118px]" /><Divider />
          <IconPanel label="Sélection" width="w-[116px]">
            <SelectSet kind="save" /><SelectSet kind="load" /><SelectSet kind="edit" />
          </IconPanel>
          <Divider />
          <RibbonPanel label="Renseig..." icon={<Barcode />} width="w-[119px]" /><Divider />
          <IconPanel label="Macros" width="w-[94px]"><MacroScroll /><MacroShield /></IconPanel>
          <Divider />
          <RibbonPanel label="Program..." icon={<DynamoIcon />} width="w-[119px]" />
        </div>
      </section>

      {/* options bar */}
      <div className="h-[56px] shrink-0 border-b-2 border-t-2 border-b-[#6f6f6f] border-t-white bg-[#e0e1e3]" />

      {/* drawing window */}
      <main className="flex h-[831px] shrink-0 border-l-2 border-[#8d8d8d]">
        <DrawingCanvas />
        <div className="flex flex-1 flex-col items-center bg-[#efefef] pr-[2px] pt-[14px] text-[#5a5a5a]">
          <Chevron d="M1 10L6 3L11 10" className="h-[9px] w-[13px]" />
          <div className="mt-[375px] h-[34px] w-[32px] bg-[#cdcdcd]" />
          <Chevron d="M1 2L6 9L11 2" className="mt-[378px] h-[9px] w-[13px]" />
        </div>
      </main>

      {/* view control bar */}
      <div className="flex h-[37px] shrink-0 items-start border-b-2 border-[#8c8c8c] bg-[#efefef] pl-[56px] text-[#5a5a5a]">
        <span className="w-[106px] text-[22px] leading-[33px] text-[#111]">1 : 50</span>
        <ViewIcons />
        <Chevron d="M9 0L2 6L9 12" className="ml-[17px] mt-[11px] h-[12px] w-[11px]" />
        <div className="ml-[510px] mt-[1px] h-[32px] w-[34px] bg-[#cdcdcd]" />
        <Chevron d="M3 0L10 6L3 12" className="ml-[508px] mt-[12px] h-[12px] w-[11px]" />
        <div className="ml-[26px] mt-[14px]"><Grip /></div>
      </div>

      {/* status bar */}
      <footer className="flex min-h-0 flex-1 items-start bg-linear-to-b from-[#e9e9e9] to-[#c2c2c2] pl-[2px] pt-[1px]">
        <span className="w-[643px] overflow-hidden whitespace-nowrap text-[23px] leading-[48px] text-[#111]">Cliquez pour sélectionner. Appuyez sur TAB pour afficher d'a</span>
        <div className="ml-[3px] flex h-[45px] w-[42px] shrink-0 justify-center bg-[#d8d8d8] pt-[6px]">
          <svg className="h-[34px] w-[34px]" viewBox="0 0 34 34">
            <path d="M2 17H10V3L13 1H23L26 4V12H30L33 15V28L31 33H24V28H18V34H4V30L1 26Z" fill="#9c9c9c" />
            <path d="M14 6L18 9L22 5M3 20L9 23L14 19M10 24V32M19 17V31M26 16V30M18 9V12" fill="none" stroke="#f2f2f2" strokeWidth="1.500" />
          </svg>
        </div>
        <div className="ml-[2px]"><Combo /></div>
        <div className="ml-[3px] flex h-[45px] w-[73px] shrink-0 bg-[#d8d8d8] pl-[5px] pt-[6px]">
          <svg className="h-[34px] w-[30px]" viewBox="0 0 30 34">
            <path d="M9 2H25L28 5V12L25 14H19L16 20L14 14H9L7 12V5Z" fill="#d8d8d8" stroke="#9c9c9c" strokeWidth="2" />
            <path d="M0 33V28L5 24L4 20L8 15L12 21L11 25L15 28V33Z" fill="#9c9c9c" />
          </svg>
          <span className="ml-[11px] pt-[11px] text-[22px] leading-[24px] tracking-[-1px] text-[#111]">:0</span>
        </div>
        <div className="ml-[2px] flex h-[45px] w-[42px] shrink-0 justify-center bg-[#d8d8d8] pt-[6px]">
          <svg className="h-[34px] w-[34px]" viewBox="0 0 34 34">
            <rect x="2" y="2" width="30" height="30" rx="2" fill="#eef0f4" stroke="#30353e" strokeWidth="3" />
            <path d="M3 4H31" stroke="#8d95a3" strokeWidth="3" /><path d="M3 6.500H31" stroke="#30353e" strokeWidth="1.500" />
            <path d="M6 11h4v4h-4z" fill="none" stroke="#30353e" strokeWidth="2" />
            <path d="M14 15H29M18 21H29M18 27H29" stroke="#30353e" strokeWidth="2.500" />
            <path d="M12 19h4v4h-4zM12 25h4v4h-4z" fill="#30353e" />
          </svg>
        </div>
        <div className="ml-[2px] flex h-[45px] w-[42px] shrink-0 justify-center bg-[#d8d8d8] pt-[6px]">
          <svg className="h-[34px] w-[34px]" viewBox="0 0 34 34">
            <rect x="3" y="1" width="28" height="28" fill="#9c9c9c" />
            <path d="M31 1V29H20" fill="none" stroke="#f4f4f4" strokeWidth="1.500" />
            <path d="M2 20H12V14L20 23L12 32V27H2Z" fill="#9c9c9c" stroke="#f0f0f0" strokeWidth="1.500" strokeDasharray="3 1" />
            <path d="M5 3H7V5H5Z" fill="#eee" />
          </svg>
        </div>
        <div className="ml-[2px]"><Combo text="Modèle de base" /></div>
        <div className="ml-[56px] mt-[26px]"><Grip /></div>
      </footer>

      {/* application button */}
      <div className="absolute left-[1px] top-[7px] flex h-[82px] w-[81px] items-start border-2 border-black bg-linear-to-b from-[#d6d6d6] to-[#7e7e7e] pl-[13px] pt-[10px]">
        <RevitLogo />
        <Caret className="mt-[26px] h-[8px] w-[14px] text-[#38404c]" />
      </div>
      <RedNumber n="1" className="left-[1414px] top-[39px]" />

      <MdiControls />
      <NavBar />
      <RedNumber n="4" className="left-[1500px] top-[658px]" />

      {/* location drop-down panel */}
      <div className="absolute left-[245px] top-[283px] flex h-[192px] w-[273px] flex-col overflow-hidden border-2 border-[#a2a2a2] border-t-[#cdcdcd] bg-white text-[23px] leading-[30px] text-[#333]">
        <div className="flex h-[54px] items-center gap-[9px] pl-[13px] pt-[5px]">
          <Globe className="h-[33px] w-[33px]" />
          <span className="tracking-[-0.2px]">Emplacement</span>
        </div>
        <div className="ml-[4px] flex h-[44px] w-[225px] items-center border-2 border-[#0563c1] bg-linear-to-b from-[#c3dbf2] to-[#abcfef] pl-[7px]">
          <SmallAxis />
          <span className="ml-[10px] w-[145px] pt-[2px] tracking-[-0.1px]">Coordonnées</span>
          <Caret className="ml-[10px] h-[6px] w-[10px]" />
        </div>
        <div className="mt-auto h-[36px] border-2 border-[#cdcdcd] bg-[#eeeeee]" />
        <RedNumber n="2" className="left-[236px] top-[32px]" />
      </div>

      {/* coordinates submenu */}
      <div className="absolute left-[252px] top-[381px] flex h-[329px] w-[468px] flex-col gap-[4px] border-2 border-[#5c5c5c] bg-white px-[2px] pt-[4px]">
        <MenuItem label="Importer les coordonnées" kind="import" active />
        <MenuItem label="Export" kind="export" />
        <MenuItem label="Spécif" kind="point" />
        <MenuItem label="Relevé" kind="report" />
        <RedNumber n="3" className="left-[397px] top-[15px]" />
      </div>

      {/* tooltip */}
      <div className="absolute left-[396px] top-[470px] z-50 flex h-[418px] w-[713px] flex-col whitespace-nowrap rounded-[4px] border-2 border-[#7f7f7f] bg-linear-to-b from-[#f0f0f0] to-[#ebebeb] text-[23px] leading-[32px] text-[#4c4c4c]">
        <p className="pl-[12px] pt-[13px] font-bold tracking-[0.05px]">Importer les coordonnées</p>
        <p className="pl-[12px] pt-[12px]">
          Détermine les coordonnées utilisées dans un projet lié et les<br />
          utilise pour le projet en cours.
        </p>
        <p className="pl-[14px] pt-[36px] tracking-[0.02px]">
          L'origine des coordonnées partagées du projet lié devient<br />
          l'origine des coordonnées partagées du projet hôte.
        </p>
        <p className="pl-[14px] pt-[20px] tracking-[-0.04px]">
          <span className="tracking-[0.08px]">Le projet hôte importe également le nord géographique du</span><br />
          projet lié. Les coordonnées internes du projet hôte ne subissent<br />
          aucune modification.
        </p>
        <div className="mt-auto h-[58px] border-t-2 border-[#b5b5b5]">
          <p className="border-t-2 border-[#f8f8f8] pl-[12px] pt-[11px] font-bold tracking-[0.2px]">Appuyez sur F1 pour obtenir de l'aide</p>
        </div>
      </div>
    </div>
  );
}
